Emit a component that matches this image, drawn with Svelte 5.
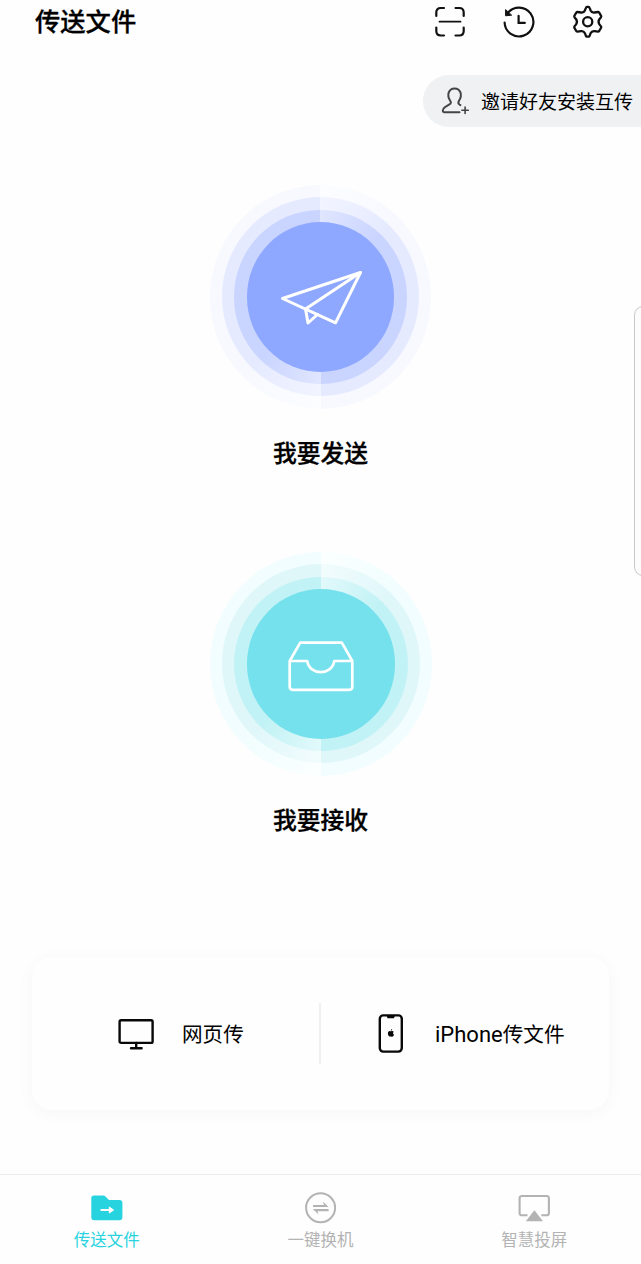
<script lang="ts">
	const actions = [
		{ id: 'send', label: '我要发送' },
		{ id: 'receive', label: '我要接收' }
	];

	const tabs = [
		{ id: 'files', label: '传送文件' },
		{ id: 'clone', label: '一键换机' },
		{ id: 'cast', label: '智慧投屏' }
	];

	let activeTab = $state('files');
</script>

<div class="screen">
	<header class="topbar">
		<h1>传送文件</h1>
		<div class="tools">
			<button aria-label="扫一扫">
				<svg width="34" height="34" viewBox="0 0 34 34" fill="none" stroke="#111" stroke-width="2.2" stroke-linecap="round">
					<path d="M3.3 11V7.5Q3.3 3 7.8 3H11M22.5 3H26.2Q30.7 3 30.7 7.5V11M30.7 22.5V26Q30.7 30.5 26.2 30.5H22.5M11 30.5H7.8Q3.3 30.5 3.3 26V22.5" />
					<path d="M6.5 16.7H27.5" stroke-width="1.8" />
				</svg>
			</button>
			<button aria-label="历史记录">
				<svg width="34" height="34" viewBox="0 0 34 34" fill="none" stroke="#111" stroke-width="2.2" stroke-linecap="round">
					<path d="M2.6 17.5A14.4 14.4 0 1 0 5.6 8.2" />
					<path d="M3.6 5V10.8L9.3 10.2Z" fill="#111" stroke-width="1" stroke-linejoin="round" />
					<path d="M16.6 10.8V17.9H22.8" />
				</svg>
			</button>
			<button aria-label="设置">
				<svg width="34" height="34" viewBox="0 0 34 34" fill="none" stroke="#111" stroke-width="2.3" stroke-linejoin="round">
					<path d="M14.9 2.8Q15.2 1.9 16 1.9H17.5Q18.3 1.9 18.6 2.8L19.6 5.4Q20.8 7.9 23.6 7.5L26.9 7Q27.7 6.9 28.2 7.6L30.1 10.8Q30.5 11.5 30 12.2L28.4 14.2Q26.7 16.8 28.4 19.4L30 21.4Q30.5 22.1 30.1 22.8L28.2 26Q27.7 26.7 26.9 26.6L23.6 26.1Q20.8 25.7 19.6 28.2L18.6 30.8Q18.3 31.7 17.5 31.7H16Q15.2 31.7 14.9 30.8L13.9 28.2Q12.7 25.7 9.9 26.1L6.6 26.6Q5.8 26.7 5.3 26L3.4 22.8Q3 22.1 3.5 21.4L5.1 19.4Q6.8 16.8 5.1 14.2L3.5 12.2Q3 11.5 3.4 10.8L5.3 7.6Q5.8 6.9 6.6 7L9.9 7.5Q12.7 7.9 13.9 5.4Z" />
					<circle cx="16.7" cy="16.8" r="4.6" />
				</svg>
			</button>
		</div>
	</header>

	<button class="invite">
		<svg width="30" height="30" viewBox="0 0 30 30" fill="none" stroke="#444" stroke-width="2" stroke-linecap="round" stroke-linejoin="round">
			<path d="M18.5 26.2H3.2Q1.3 26.2 2 23.8C2.7 21 6 19.7 8.8 18.2Q10.7 17 9.2 14.8C5.4 9 7.7 2.4 13.6 2.4S21.8 9 18 14.8Q16.6 17.3 18.4 18.5L19.4 19.1" />
			<path d="M24.1 21V27.4M20.9 24.2H27.3" stroke-width="1.6" />
		</svg>
		<span>邀请好友安装互传</span>
	</button>

	<main>
		{#each actions as action (action.id)}
			<button class="action {action.id}">
				<span class="ring outer">
					<span class="ring middle">
						<span class="ring inner">
							<span class="disc">
								{#if action.id === 'send'}
									<svg width="84" height="60" viewBox="0 0 84 60" fill="none" stroke="#fff" stroke-width="3" stroke-linejoin="round" stroke-linecap="round">
										<path d="M2.5 29.5L80.5 3.5L55.5 53.8Z" />
										<path d="M80.5 3.5L25.5 40L28 54L37.5 45.5" />
									</svg>
								{:else}
									<svg width="66" height="52" viewBox="0 0 66 52" fill="none" stroke="#fff" stroke-width="2.7" stroke-linejoin="round">
										<path d="M1.7 21L12.2 2.6H53.8L64.3 21V46.8Q64.3 49.8 61.3 49.8H4.7Q1.7 49.8 1.7 46.8Z" />
										<path d="M1.7 21H19.2C21.5 35.8 44 35.8 46.3 21H64.3" />
									</svg>
								{/if}
							</span>
						</span>
					</span>
				</span>
				<span class="action-label">{action.label}</span>
			</button>
		{/each}
	</main>

	<section class="card">
		<button class="web">
			<svg width="36" height="32" viewBox="0 0 36 32" fill="none" stroke="#080808" stroke-width="2.4" stroke-linecap="round">
				<rect x="1.6" y="2.3" width="33" height="22.6" rx="1.5" />
				<path d="M18.2 25V30M13 30.2H23.6" />
			</svg>
			<span>网页传</span>
		</button>
		<div class="divider"></div>
		<button class="iphone">
			<svg width="26" height="40" viewBox="0 0 26 40">
				<rect x="1.8" y="1.4" width="22" height="36.2" rx="3.5" fill="none" stroke="#080808" stroke-width="2.4" />
				<path d="M8.5 1.5H17L16 4.3H9.5Z" fill="#080808" />
				<path d="M12.8 17.4C14 16.8 15.3 17 15.7 17.8C14.7 18.7 14.9 20.1 16 20.7C15.4 22.4 14.5 23.1 13 22.4C11.4 23.1 10.3 21.7 9.9 19.9C9.7 17.5 11.4 16.6 12.8 17.4ZM12.7 16.8Q12.7 15.4 14.2 15.1Q14.2 16.5 12.7 16.8Z" fill="#080808" />
			</svg>
			<span><span class="latin">iPhone</span>传文件</span>
		</button>
	</section>

	<nav>
		{#each tabs as tab (tab.id)}
			<button class="tab" class:active={activeTab === tab.id} onclick={() => (activeTab = tab.id)}>
				{#if tab.id === 'files'}
					<svg width="34" height="34" viewBox="0 0 34 34">
						<path d="M1.3 7Q1.3 4.4 3.9 4.4H13.2Q14.2 4.4 14.9 5.1L19 9.1H29.5Q32.4 9.1 32.4 12V26.3Q32.4 29.2 29.5 29.2H4.2Q1.3 29.2 1.3 26.3Z" fill="currentColor" />
						<path d="M11.3 19H20" stroke="#fff" stroke-width="2" stroke-linecap="round" />
						<path d="M19.3 16L23.6 19L19.3 22Z" fill="#fff" stroke="#fff" stroke-linejoin="round" />
					</svg>
				{:else if tab.id === 'clone'}
					<svg width="34" height="34" viewBox="0 0 34 34">
						<circle cx="16.6" cy="16.8" r="14.5" fill="none" stroke="currentColor" stroke-width="2" />
						<path d="M9 13.9H20L18.8 10.5L24.6 16H9ZM24.6 18.1H8.8L14.6 23.6L13.4 20.2H24.6Z" fill="currentColor" />
					</svg>
				{:else}
					<svg width="34" height="34" viewBox="0 0 34 34">
						<path d="M10.5 24.3H5Q2.6 24.3 2.6 21.9V7.4Q2.6 5 5 5H29.5Q31.9 5 31.9 7.4V21.9Q31.9 24.3 29.5 24.3H24.3" fill="none" stroke="currentColor" stroke-width="2.1" />
						<path d="M17.4 19.3L26 30.3H8.8Z" fill="currentColor" />
					</svg>
				{/if}
				<span>{tab.label}</span>
			</button>
		{/each}
	</nav>

	<div class="edge-panel"></div>
</div>

<style>
	:global(body) {
		margin: 0;
		background: #fefefe;
	}

	.screen {
		position: relative;
		display: flex;
		flex-direction: column;
		box-sizing: border-box;
		width: 641px;
		height: 1264px;
		overflow: hidden;
		background: #fefefe;
		color: #000;
		font-family: Roboto, 'Noto Sans CJK SC', sans-serif;
	}

	button {
		display: flex;
		align-items: center;
		padding: 0;
		border: none;
		background: none;
		color: inherit;
		font: inherit;
		white-space: nowrap;
		cursor: pointer;
	}

	svg {
		display: block;
		flex: none;
	}

	.topbar {
		display: flex;
		align-items: center;
		justify-content: space-between;
		height: 43px;
		padding: 0 36px 0 35px;
	}

	h1 {
		margin: 0;
		padding-top: 2px;
		font-size: 25.3px;
		font-weight: 500;
		line-height: 41px;
		-webkit-text-stroke: 0.3px;
	}

	.tools {
		display: flex;
		gap: 35px;
	}

	.invite {
		align-self: flex-end;
		box-sizing: border-box;
		width: 218px;
		height: 52px;
		margin-top: 32px;
		padding-left: 18px;
		gap: 10px;
		border-radius: 26px 0 0 26px;
		background: #f0f1f3;
		font-size: 19px;
	}

	.invite span {
		padding-bottom: 2px;
	}

	main {
		display: flex;
		flex-direction: column;
		align-items: center;
		gap: 82px;
		margin-top: 58px;
	}

	.action {
		flex-direction: column;
		height: 285px;
	}

	/* each half of a ring fades in clockwise from its seam */
	.ring {
		display: block;
		padding: 12.3px;
		border-radius: 50%;
		background: conic-gradient(var(--soft), var(--tint) 45deg 180deg, var(--soft) 180deg, var(--tint) 225deg 360deg);
	}

	.send .outer {
		--tint: #f8f9ff;
		--soft: #fcfdff;
	}

	.send .middle {
		--tint: #e5eaff;
		--soft: #f2f4ff;
	}

	.send .inner {
		--tint: #c9d4ff;
		--soft: #e0e6ff;
	}

	.receive .outer {
		--tint: #f1fdfe;
		--soft: #fbffff;
	}

	.receive .middle {
		--tint: #e0f7fa;
		--soft: #f2fcfd;
	}

	.receive .inner {
		--tint: #c1f2f5;
		--soft: #e2f9fb;
	}

	.disc {
		display: flex;
		align-items: center;
		justify-content: center;
		box-sizing: border-box;
		width: 147.6px;
		height: 150px;
		padding: 5px 0 0 3px;
		border-radius: 50%;
		background: #8ea8ff;
	}

	.receive .ring.outer {
		margin-left: 1px;
	}

	.receive .disc {
		width: 148.6px;
		padding: 5px 1px 0 0;
		background: #74e1ec;
	}

	.action-label {
		margin-top: 27px;
		font-size: 23.8px;
		font-weight: 500;
		line-height: 36px;
		-webkit-text-stroke: 0.3px;
	}

	.card {
		display: flex;
		align-items: center;
		box-sizing: border-box;
		width: 577px;
		height: 153px;
		margin: 120px 0 0 32px;
		border-radius: 20px;
		background: #fefefe;
		box-shadow: 0 3px 18px rgba(0, 0, 0, 0.035);
		font-size: 20.6px;
	}

	.card span {
		line-height: 30px;
	}

	.card button > span {
		padding-top: 2px;
	}

	.web {
		width: 287px;
		padding-left: 86px;
		gap: 28px;
	}

	.divider {
		width: 2px;
		height: 61px;
		background: #f0f0f0;
	}

	.iphone {
		padding-left: 57px;
		gap: 31px;
	}

	.latin {
		font-size: 22px;
	}

	nav {
		display: flex;
		box-sizing: border-box;
		height: 90px;
		margin-top: auto;
		border-top: 1px solid #ededed;
	}

	.tab {
		flex: 1;
		flex-direction: column;
		padding-top: 16px;
		color: #b3b3b3;
		font-size: 16.5px;
		line-height: 32px;
	}

	.tab.active {
		color: #27d3df;
	}

	/* system drawer handle peeking in from the right edge */
	.edge-panel {
		position: absolute;
		top: 306px;
		right: -13px;
		box-sizing: border-box;
		width: 20px;
		height: 270px;
		border: 1px solid #c8c8c8;
		border-radius: 9px;
		background: #fcfcfc;
	}
</style>
